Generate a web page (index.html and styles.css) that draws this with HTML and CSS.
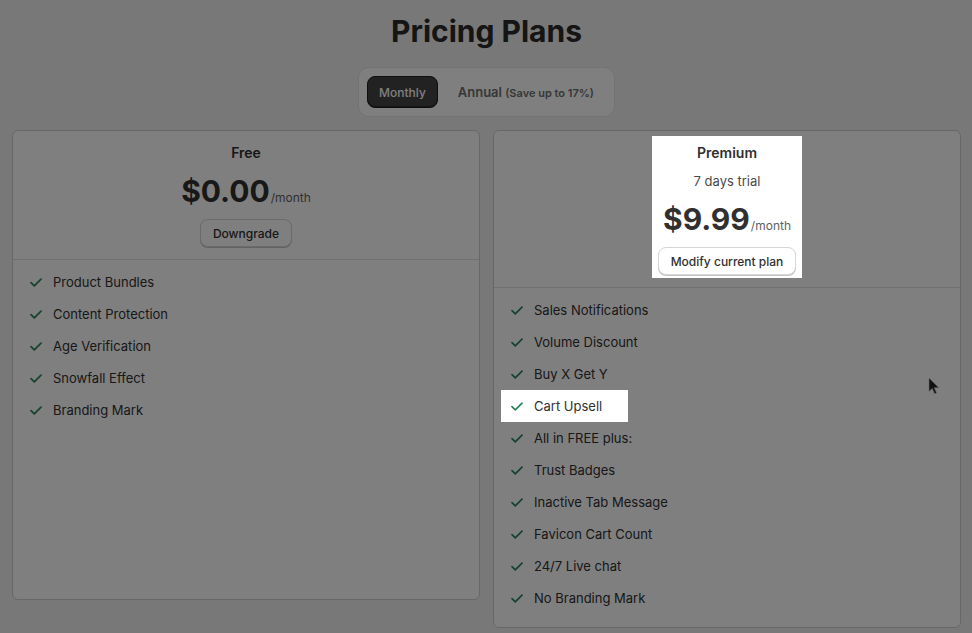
FILE: index.html
```html
<!DOCTYPE html>
<html lang="en">
<head>
<meta charset="utf-8">
<title>Pricing Plans</title>
<link rel="stylesheet" href="styles.css">
</head>
<body>
<main class="page">
  <h1 class="title">Pricing Plans</h1>
  <div class="toggle-wrap">
    <div class="toggle">
      <button class="toggle-btn active">Monthly</button>
      <button class="toggle-btn">Annual <span class="save">(Save up to 17%)</span></button>
    </div>
  </div>
  <div class="plans">
    <section class="card">
      <div class="plan-head">
        <div class="plan-head-inner">
          <div class="plan-name">Free</div>
          <div class="price"><span class="amount">$0.00</span><span class="per">/month</span></div>
          <button class="btn">Downgrade</button>
        </div>
      </div>
      <ul class="features">
        <li class="feature"><svg class="check" viewBox="0 0 12 9"><path d="M1 4.6 L4.3 7.8 L11 1.2"/></svg>Product Bundles</li>
        <li class="feature"><svg class="check" viewBox="0 0 12 9"><path d="M1 4.6 L4.3 7.8 L11 1.2"/></svg>Content Protection</li>
        <li class="feature"><svg class="check" viewBox="0 0 12 9"><path d="M1 4.6 L4.3 7.8 L11 1.2"/></svg>Age Verification</li>
        <li class="feature"><svg class="check" viewBox="0 0 12 9"><path d="M1 4.6 L4.3 7.8 L11 1.2"/></svg>Snowfall Effect</li>
        <li class="feature"><svg class="check" viewBox="0 0 12 9"><path d="M1 4.6 L4.3 7.8 L11 1.2"/></svg>Branding Mark</li>
      </ul>
    </section>
    <section class="card">
      <div class="plan-head">
        <div class="plan-head-inner spot spot-head">
          <div class="plan-name">Premium</div>
          <div class="trial">7 days trial</div>
          <div class="price"><span class="amount">$9.99</span><span class="per">/month</span></div>
          <button class="btn">Modify current plan</button>
        </div>
      </div>
      <ul class="features">
        <li class="feature"><svg class="check" viewBox="0 0 12 9"><path d="M1 4.6 L4.3 7.8 L11 1.2"/></svg>Sales Notifications</li>
        <li class="feature"><svg class="check" viewBox="0 0 12 9"><path d="M1 4.6 L4.3 7.8 L11 1.2"/></svg>Volume Discount</li>
        <li class="feature"><svg class="check" viewBox="0 0 12 9"><path d="M1 4.6 L4.3 7.8 L11 1.2"/></svg>Buy X Get Y</li>
        <li class="feature spot spot-row"><svg class="check" viewBox="0 0 12 9"><path d="M1 4.6 L4.3 7.8 L11 1.2"/></svg>Cart Upsell</li>
        <li class="feature"><svg class="check" viewBox="0 0 12 9"><path d="M1 4.6 L4.3 7.8 L11 1.2"/></svg>All in FREE plus:</li>
        <li class="feature"><svg class="check" viewBox="0 0 12 9"><path d="M1 4.6 L4.3 7.8 L11 1.2"/></svg>Trust Badges</li>
        <li class="feature"><svg class="check" viewBox="0 0 12 9"><path d="M1 4.6 L4.3 7.8 L11 1.2"/></svg>Inactive Tab Message</li>
        <li class="feature"><svg class="check" viewBox="0 0 12 9"><path d="M1 4.6 L4.3 7.8 L11 1.2"/></svg>Favicon Cart Count</li>
        <li class="feature"><svg class="check" viewBox="0 0 12 9"><path d="M1 4.6 L4.3 7.8 L11 1.2"/></svg>24/7 Live chat</li>
        <li class="feature"><svg class="check" viewBox="0 0 12 9"><path d="M1 4.6 L4.3 7.8 L11 1.2"/></svg>No Branding Mark</li>
      </ul>
    </section>
  </div>
</main>
<div class="overlay"></div>
<svg class="cursor" viewBox="0 0 12 18"><path d="M1 1 L1 14.5 L4.2 11.4 L6.6 16.8 L8.6 15.9 L6.3 10.7 L10.8 10.7 Z"/></svg>
</body>
</html>
```
FILE: styles.css
```css
* { box-sizing: border-box; }
html, body {
  margin: 0;
  padding: 0;
  background: #f1f1f1;
  font-family: Inter, "Noto Sans", sans-serif;
  color: #303030;
  font-size: 13px;
  line-height: 20px;
}
.page {
  padding: 13px 11px 0 12px;
}
.title {
  margin: 0;
  text-align: center;
  font-size: 30px;
  line-height: 36px;
  font-weight: 700;
  color: #2a2a2a;
}
.toggle-wrap {
  display: flex;
  justify-content: center;
  margin-top: 18px;
}
.toggle {
  display: flex;
  gap: 8px;
  padding: 8px;
  background: #ffffff;
  border: 1px solid #e6e6e6;
  border-radius: 11px;
}
.toggle-btn {
  font-family: inherit;
  height: 32px;
  padding: 0 11px;
  border: 1px solid transparent;
  border-radius: 8px;
  background: transparent;
  font-size: 13px;
  font-weight: 600;
  color: #6e6e6e;
  cursor: pointer;
}
.toggle-btn.active {
  background: #444444;
  border-color: #1c1c1c;
  color: #ffffff;
  font-size: 12px;
  font-weight: 500;
  box-shadow: inset 0 -1px 0 #2a2a2a;
}
.save {
  font-size: 11px;
  font-weight: 600;
}
.plans {
  display: grid;
  grid-template-columns: 1fr 1fr;
  gap: 13px;
  margin-top: 13px;
  align-items: start;
}
.card {
  background: #ffffff;
  border: 1px solid #cfcfcf;
  border-radius: 6px;
}
.plan-head {
  display: flex;
  justify-content: center;
  padding: 12px 16px;
}
.plan-head-inner {
  display: flex;
  flex-direction: column;
  align-items: center;
  gap: 8px;
}
.plan-name {
  font-size: 14px;
  font-weight: 600;
}
.trial {
  color: #4a4a4a;
}
.price {
  display: flex;
  align-items: baseline;
  height: 40px;
  line-height: 40px;
}
.amount {
  font-size: 30px;
  font-weight: 700;
}
.per {
  font-size: 12px;
  color: #616161;
  margin-left: 1px;
}
.btn {
  font-family: inherit;
  height: 28px;
  padding: 0 12px;
  font-size: 12px;
  font-weight: 500;
  color: #303030;
  background: #ffffff;
  border: 1px solid #d6d6d6;
  border-radius: 8px;
  box-shadow: 0 1px 0 #c4c4c4;
  cursor: pointer;
}
.features {
  list-style: none;
  margin: 0;
  padding: 12px 16px 19px;
  min-height: 340px;
  border-top: 1px solid #e3e3e3;
  display: flex;
  flex-direction: column;
  gap: 12px;
}
.feature {
  display: flex;
  align-items: center;
  gap: 11px;
  color: #303030;
}
.check {
  width: 12px;
  height: 9px;
  flex: none;
  margin-left: 1px;
}
.check path {
  fill: none;
  stroke: #29845a;
  stroke-width: 1.7;
  stroke-linecap: round;
  stroke-linejoin: round;
}
.spot {
  position: relative;
  z-index: 20;
  background: #ffffff;
}
.spot-head {
  padding: 7px 6px 3px;
  margin: -7px -6px -3px;
}
.spot-row {
  align-self: flex-start;
  padding: 6px 26px 6px 9px;
  margin: -6px -26px -6px -9px;
}
.overlay {
  position: fixed;
  inset: 0;
  background: rgba(0, 0, 0, 0.5);
  z-index: 10;
}
.cursor {
  position: fixed;
  left: 928px;
  top: 377px;
  width: 12px;
  height: 18px;
  z-index: 30;
}
.cursor path {
  fill: #111111;
  stroke: #6a6a6a;
  stroke-width: 0.6;
}
```
